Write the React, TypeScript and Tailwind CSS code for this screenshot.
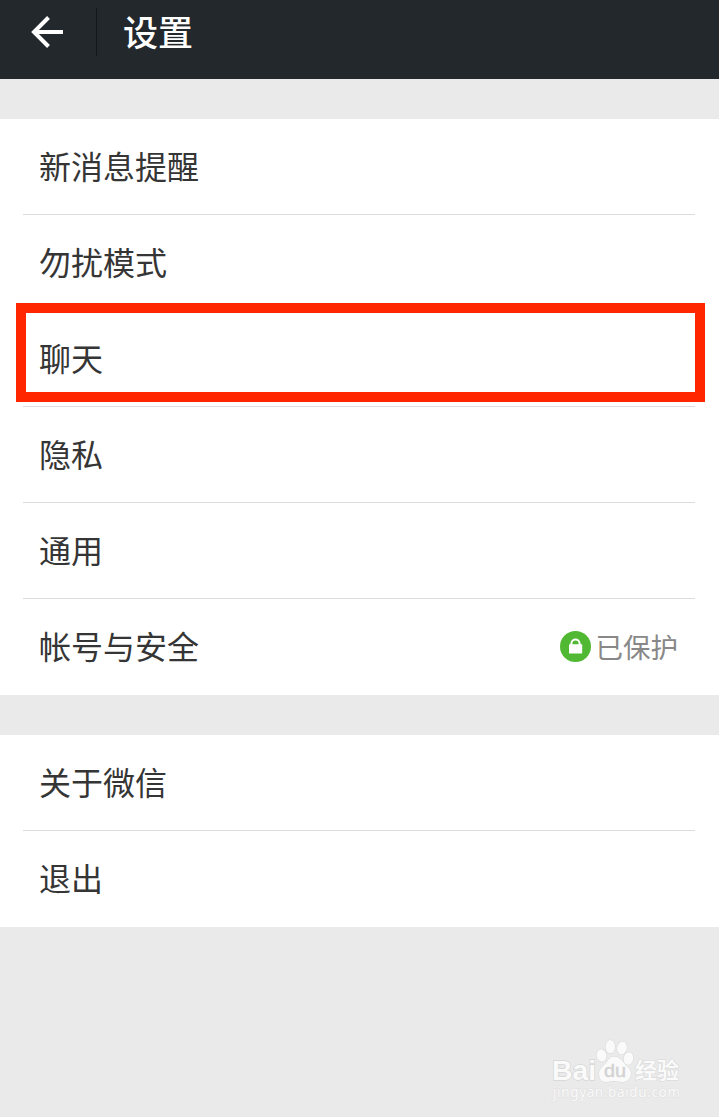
type Item = {
  label: string;
  highlighted?: boolean;
  isProtected?: boolean;
};

const groups: Item[][] = [
  [
    { label: '新消息提醒' },
    { label: '勿扰模式' },
    { label: '聊天', highlighted: true },
    { label: '隐私' },
    { label: '通用' },
    { label: '帐号与安全', isProtected: true },
  ],
  [{ label: '关于微信' }, { label: '退出' }],
];

function Header() {
  return (
    <header className="flex h-[79px] items-start bg-[#22282c] text-white">
      <button aria-label="返回" className="flex h-[64px] w-24 items-center pl-[30px]">
        <svg width="34" height="34" viewBox="0 0 34 34" fill="none" stroke="currentColor" strokeWidth="4">
          <path d="M33 17H4M18.5 2.5L4 17l14.5 14.5" />
        </svg>
      </button>
      <div className="mt-2 h-12 w-px bg-[#14181b]" />
      <h1 className="ml-[26px] mt-[9px] text-[35px] leading-[52px] font-medium">设置</h1>
    </header>
  );
}

function ProtectedBadge() {
  return (
    <div className="flex items-center gap-[5px] text-[#888]">
      <svg width="31" height="31" viewBox="0 0 31 31">
        <circle cx="15.5" cy="15.5" r="15.5" fill="#50b832" />
        <path d="M11.4 14v-1.5a4.1 4.1 0 0 1 8.2 0v1.5" fill="none" stroke="#fff" strokeWidth="2" />
        <rect x="9" y="13.2" width="13.2" height="9.2" rx="0.6" fill="#fff" />
      </svg>
      <span className="pt-1 text-[27.5px] leading-[40px]">已保护</span>
    </div>
  );
}

function Row({ item, last }: { item: Item; last: boolean }) {
  return (
    <li className="relative h-24 pl-[23px] pr-6">
      <div
        className={`flex h-full items-center justify-between border-b pl-4 pr-[17px] ${
          last ? 'border-transparent' : 'border-[#dcdcdc]'
        }`}
      >
        <span className="pt-[3px] text-[32px] leading-[48px] text-[#353535]">{item.label}</span>
        {item.isProtected && <ProtectedBadge />}
      </div>
      {item.highlighted && (
        <div className="pointer-events-none absolute -top-2 left-4 h-[99px] w-[689px] border-10 border-[#ff2600]" />
      )}
    </li>
  );
}

function Watermark() {
  return (
    <svg
      className="absolute -bottom-px -right-px"
      width="180"
      height="98"
      viewBox="0 0 180 98"
      fill="#fafafa"
      stroke="#d6d6d6"
      strokeWidth="1"
      paintOrder="stroke"
    >
      <text x="12" y="59.5" fontFamily="Liberation Sans" fontSize="27" fontWeight="700" strokeWidth="1.4" textLength="44" lengthAdjust="spacingAndGlyphs">
        Bai
      </text>
      <ellipse cx="61.5" cy="35.5" rx="5" ry="6.2" transform="rotate(-12 61.5 35.5)" />
      <ellipse cx="70.3" cy="26.7" rx="4.8" ry="6.6" />
      <ellipse cx="82" cy="28" rx="4.8" ry="6.6" transform="rotate(12 82 28)" />
      <ellipse cx="88.5" cy="38.5" rx="4.8" ry="6.4" transform="rotate(12 88.5 38.5)" />
      <path d="M74 36.5c5 0 7.5 3.5 10 6.5c3 3.5 7 5.5 7 10.5c0 6-5 8.5-9 8.5c-3 0-5-1-8-1s-5 1-8 1c-4 0-7-3-7-8c0-5 4-7.5 7-11c2.5-3 4-6.5 8-6.5z" />
      <text x="64" y="57" fontFamily="Liberation Sans" fontSize="19" textLength="22" lengthAdjust="spacingAndGlyphs" fill="#d3d3d3" stroke="#d3d3d3" strokeWidth="0.5">
        du
      </text>
      <text x="95" y="57.5" fontFamily="Noto Sans CJK SC" fontSize="22" fontWeight="700" textLength="44" lengthAdjust="spacingAndGlyphs">
        经验
      </text>
      <text x="13" y="76.5" fontFamily="Noto Sans" fontSize="13.5" textLength="127" lengthAdjust="spacing" stroke="#dedede">
        jingyan.baidu.com
      </text>
    </svg>
  );
}

export default function App() {
  return (
    <div className="h-[1118px] w-[720px] overflow-hidden bg-white pb-px pr-px font-['Roboto','Noto_Sans_CJK_SC',sans-serif]">
      <div className="relative h-full bg-[#eaeaea]">
        <Header />
        <main>
          {groups.map((group, index) => (
            <ul key={index} className="mt-10 bg-white">
              {group.map((item, i) => (
                <Row key={item.label} item={item} last={i === group.length - 1} />
              ))}
            </ul>
          ))}
        </main>
        <Watermark />
      </div>
    </div>
  );
}
